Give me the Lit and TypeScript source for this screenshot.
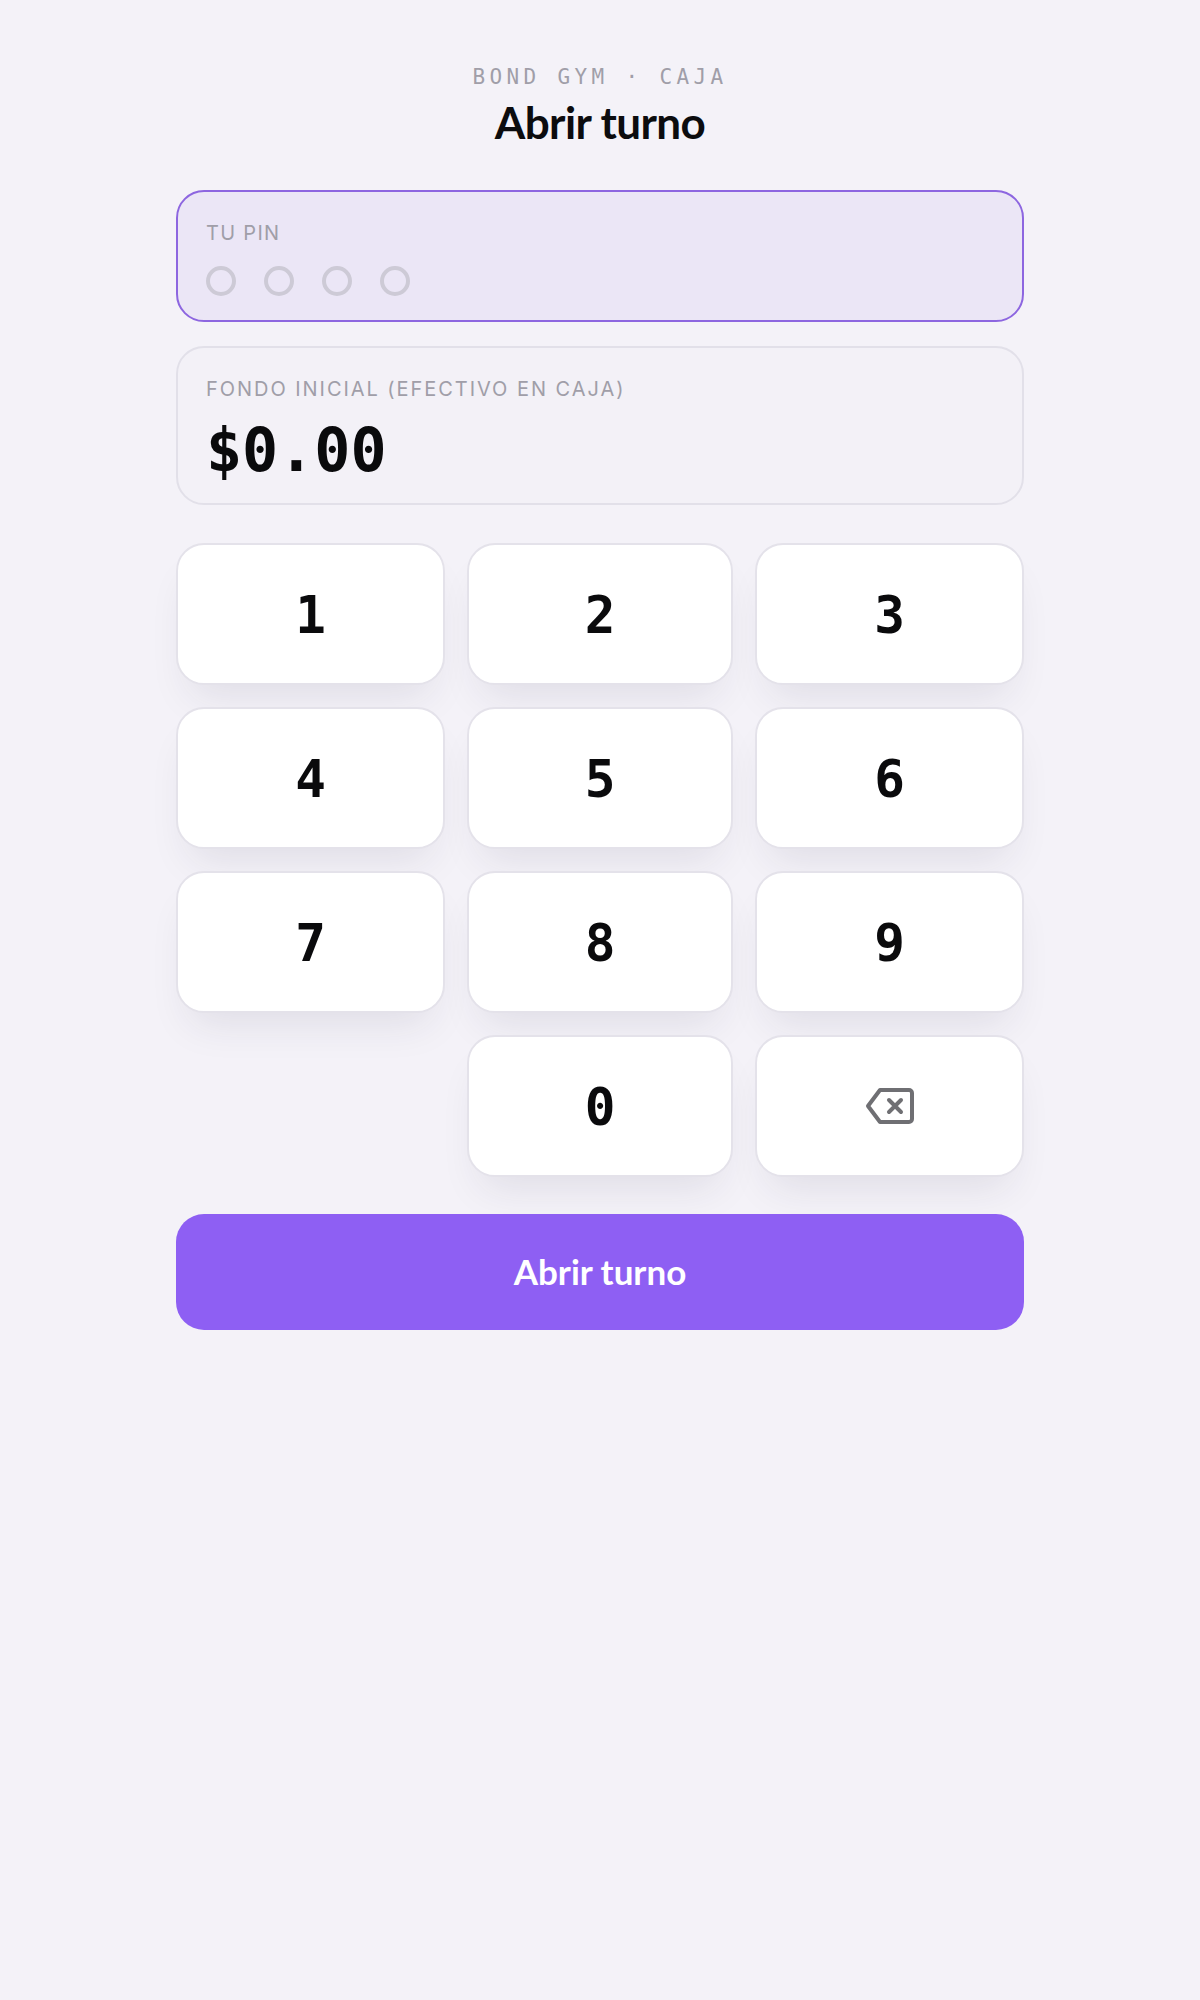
import { LitElement, html, css } from "lit";
import { customElement } from "lit/decorators.js";

@customElement("app-root")
export class AppRoot extends LitElement {
  static styles = css`
    :host { display: block; min-height: 2000px; background: #f4f2f8; font-family: "Inter", sans-serif; }
    .page { padding: 65px 176px 0; display: flex; flex-direction: column; box-sizing: border-box; }
    .eyebrow { text-align: center; font: 400 21px/24px "DejaVu Sans Mono", monospace; letter-spacing: 4.35px; color: #a09ea8; }
    h1 { margin: 5px 0 0; text-align: center; font: 700 44px/56px "Lato", sans-serif; letter-spacing: -0.6px; color: #0c0c0e; }
    .card { box-sizing: border-box; border: 2px solid #e2e0e9; border-radius: 28px; padding: 27px 28px 0; }
    .pin { margin-top: 40px; height: 132px; background: #ebe6f6; border-color: #8d66e0; }
    .cash { margin-top: 24px; height: 159px; background: #f3f1f7; }
    .label { font-size: 20px; line-height: 28px; letter-spacing: 1.3px; color: #a09ea8; }
    .label.wide { letter-spacing: 1.95px; }
    .dots { display: flex; gap: 28px; margin-top: 19px; }
    .dot { box-sizing: border-box; width: 30px; height: 30px; border-radius: 50%; border: 4px solid #cdcad6; }
    .amount { font: 700 60px/72px "DejaVu Sans Mono", monospace; color: #0a0a0c; margin-top: 11px; }
    .keys { display: grid; grid-template-columns: 269px 1fr 269px; gap: 22px; margin-top: 38px; }
    .key { height: 142px; box-sizing: border-box; padding-top: 2px; background: #fff; border: 2px solid #e4e2ea; border-radius: 28px; display: flex; align-items: center; justify-content: center; font: 700 51px/1 "DejaVu Sans Mono", monospace; color: #0a0a0c; box-shadow: 0 24px 40px -14px rgba(40, 36, 70, 0.1); }
    .spacer { height: 142px; }
    .key svg { width: 50px; height: 38px; display: block; }
    .key.icon { padding-top: 0; }
    .cta { margin-top: 37px; height: 116px; box-sizing: border-box; padding-bottom: 2px; background: #8e5ff3; border-radius: 28px; display: flex; align-items: center; justify-content: center; color: #fff; font: 700 35px/1 "Lato", sans-serif; }
  `;

  render() {
    const keys = ["1", "2", "3", "4", "5", "6", "7", "8", "9"];
    return html`
      <div class="page">
        <div class="eyebrow">BOND GYM · CAJA</div>
        <h1>Abrir turno</h1>
        <div class="card pin">
          <div class="label">TU PIN</div>
          <div class="dots">
            <span class="dot"></span><span class="dot"></span><span class="dot"></span><span class="dot"></span>
          </div>
        </div>
        <div class="card cash">
          <div class="label wide">FONDO INICIAL (EFECTIVO EN CAJA)</div>
          <div class="amount">$0.00</div>
        </div>
        <div class="keys">
          ${keys.map((k) => html`<div class="key">${k}</div>`)}
          <div class="spacer"></div>
          <div class="key">0</div>
          <div class="key icon">
            <svg viewBox="0 0 50 38" fill="none" stroke="#6f6f73" stroke-width="4" stroke-linejoin="round" stroke-linecap="round">
              <path d="M15 3H44a3 3 0 0 1 3 3V32a3 3 0 0 1-3 3H15L3 19Z" />
              <path d="M24 13L36 25M36 13L24 25" />
            </svg>
          </div>
        </div>
        <div class="cta">Abrir turno</div>
      </div>
    `;
  }
}
